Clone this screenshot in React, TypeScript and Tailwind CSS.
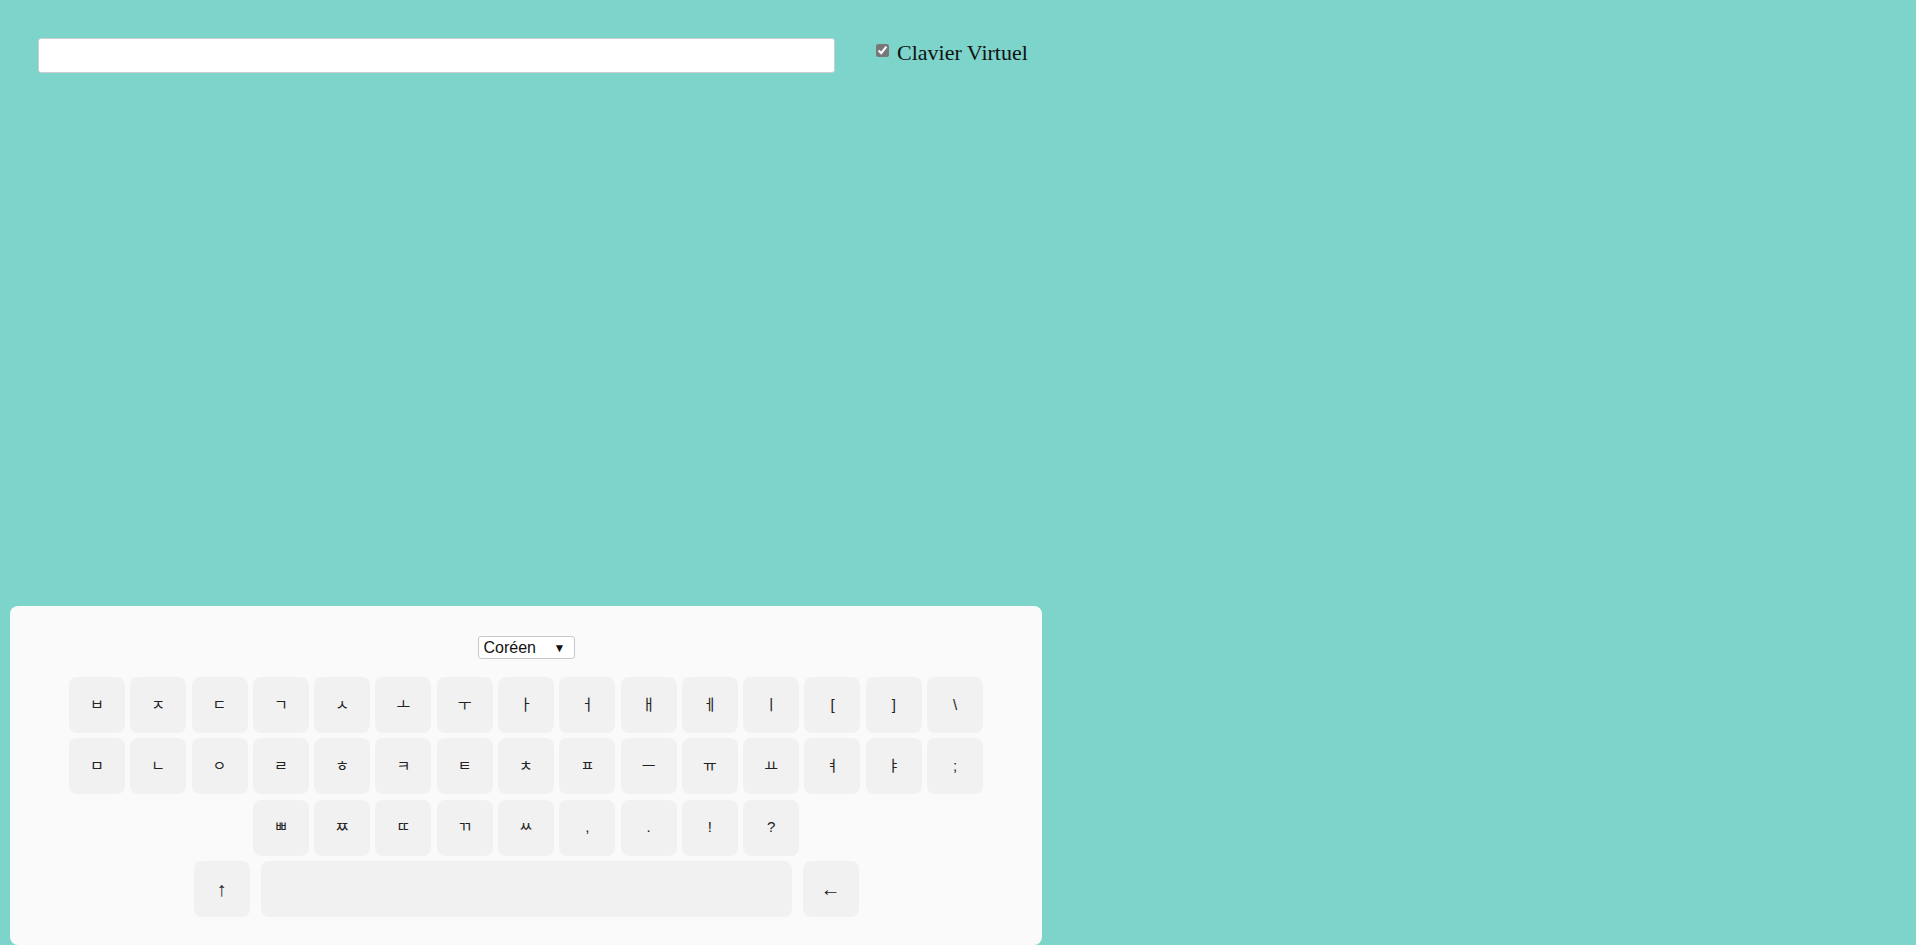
import React from "react";

const row1 = ["ㅂ", "ㅈ", "ㄷ", "ㄱ", "ㅅ", "ㅗ", "ㅜ", "ㅏ", "ㅓ", "ㅐ", "ㅔ", "ㅣ", "[", "]", "\\"];
const row2 = ["ㅁ", "ㄴ", "ㅇ", "ㄹ", "ㅎ", "ㅋ", "ㅌ", "ㅊ", "ㅍ", "ㅡ", "ㅠ", "ㅛ", "ㅕ", "ㅑ", ";"];
const row3 = ["ㅃ", "ㅉ", "ㄸ", "ㄲ", "ㅆ", ",", ".", "!", "?"];

function Key({ label }: { label: string }) {
  return (
    <button className="w-[56px] h-[56px] rounded-[8px] bg-[#f1f1f1] text-[15px] text-[#222] flex items-center justify-center">
      {label}
    </button>
  );
}

export default function App() {
  return (
    <div className="min-h-screen w-full bg-[#7cd4cb] flex flex-col">
      {/* TOP — INPUT + TOGGLE */}
      <div className="flex items-center pt-[38px] pl-[38px]">
        <input
          type="text"
          className="w-[797px] h-[35px] bg-white border border-[#c9cfcf] rounded-[3px] outline-none"
        />
        <label
          className="ml-[41px] flex items-center text-[22px] text-[#111] -mt-[6px]"
          style={{ fontFamily: '"Liberation Serif", "Times New Roman", serif' }}
        >
          <input type="checkbox" defaultChecked className="w-[13px] h-[13px] mr-[8px] -mt-[4px] accent-[#777]" />
          Clavier Virtuel
        </label>
      </div>

      {/* BOTTOM — VIRTUAL KEYBOARD */}
      <div
        className="mt-auto ml-[10px] w-[1032px] h-[339px] bg-[#fafafa] rounded-[8px] flex flex-col items-center pt-[30px]"
        style={{ fontFamily: '"Liberation Sans", Arial, "Noto Sans CJK KR", sans-serif' }}
      >
        <div className="w-[97px] h-[23px] border border-[#c8c8c8] rounded-[3px] bg-white flex items-center justify-between pl-[5px] pr-[8px] text-[16px] text-[#111]">
          <span>Coréen</span>
          <span className="text-[12px]">▼</span>
        </div>

        <div className="mt-[18px] flex flex-col gap-[5.3px]">
          <div className="flex justify-center gap-[5.3px]">
            {row1.map((k) => (
              <Key key={k} label={k} />
            ))}
          </div>
          <div className="flex justify-center gap-[5.3px]">
            {row2.map((k) => (
              <Key key={k} label={k} />
            ))}
          </div>
          <div className="flex justify-center gap-[5.3px]">
            {row3.map((k) => (
              <Key key={k} label={k} />
            ))}
          </div>
          <div className="flex justify-center gap-[11px]">
            <button className="w-[56px] h-[56px] rounded-[8px] bg-[#f1f1f1] text-[20px] text-[#222] flex items-center justify-center">
              ↑
            </button>
            <button className="w-[531px] h-[56px] rounded-[8px] bg-[#f1f1f1]" />
            <button className="w-[56px] h-[56px] rounded-[8px] bg-[#f1f1f1] text-[20px] text-[#222] flex items-center justify-center">
              ←
            </button>
          </div>
        </div>
      </div>
    </div>
  );
}
